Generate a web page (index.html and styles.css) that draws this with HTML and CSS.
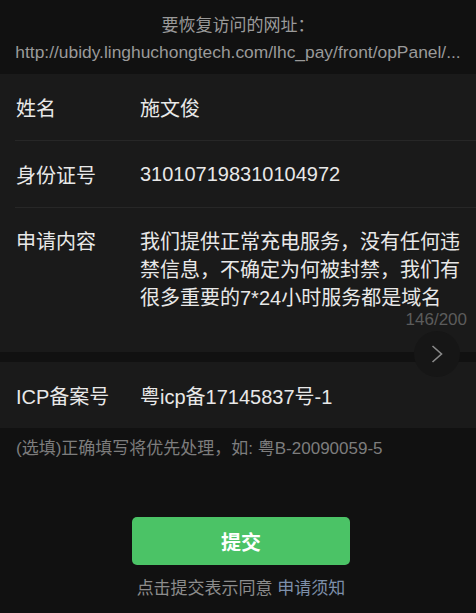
FILE: index.html
```html
<!DOCTYPE html>
<html lang="zh-CN">
<head>
  <meta charset="UTF-8">
  <meta name="viewport" content="width=device-width, initial-scale=1.0">
  <title>申请恢复访问</title>
  <link rel="stylesheet" href="styles.css">
</head>
<body>
  <div class="page">
    <!-- Target url -->
    <div class="target">
      <p class="target-title">要恢复访问的网址：</p>
      <p class="target-url">http://ubidy.linghuchongtech.com/lhc_pay/front/opPanel/...</p>
    </div>

    <!-- Applicant info -->
    <div class="group">
      <div class="row">
        <span class="label">姓名</span>
        <span class="value">施文俊</span>
      </div>
      <div class="row">
        <span class="label">身份证号</span>
        <span class="value">310107198310104972</span>
      </div>
      <div class="row row-text">
        <span class="label">申请内容</span>
        <div class="content">
          <p class="content-text">我们提供正常充电服务，没有任何违禁信息，不确定为何被封禁，我们有很多重要的7*24小时服务都是域名</p>
          <p class="counter">146/200</p>
        </div>
      </div>
    </div>

    <div class="group">
      <div class="row">
        <span class="label">ICP备案号</span>
        <span class="value">粤icp备17145837号-1</span>
      </div>
    </div>
    <p class="hint">(选填)正确填写将优先处理，如: 粤B-20090059-5</p>

    <div class="actions">
      <button type="button" class="submit-btn">提交</button>
      <p class="agree">点击提交表示同意 <a href="#" class="agree-link">申请须知</a></p>
    </div>

    <!-- floating next button -->
    <button type="button" class="float-next" aria-label="下一步">
      <svg width="12" height="18" viewBox="0 0 12 18"><path d="M1.5 1 L10.5 9 L1.5 17" fill="none" stroke="#8a8a8a" stroke-width="1.6"/></svg>
    </button>
  </div>
</body>
</html>
```

FILE: styles.css
```css
body {
  margin: 0;
  padding: 0;
  background-color: #111;
  font-family: "Liberation Sans", "Noto Sans CJK SC", sans-serif;
  color: #e8e8e8;
}
p {
  margin: 0;
}
.page {
  position: relative;
  min-height: 613px;
}
.target {
  padding: 12px 8px 8px;
  text-align: center;
  color: #9a9a9a;
  font-size: 17px;
  line-height: 27px;
}
.target-url {
  white-space: nowrap;
  overflow: hidden;
  font-size: 17.4px;
}
.group {
  background-color: #1a1a1a;
  margin-bottom: 10px;
}
.row {
  display: flex;
  align-items: center;
  min-height: 66px;
  margin-left: 15px;
  padding-left: 1px;
  padding-right: 16px;
  border-bottom: 1px solid #272727;
  font-size: 20px;
}
.row:last-child {
  border-bottom: none;
}
.label {
  width: 124px;
  flex-shrink: 0;
}
.row-text {
  align-items: flex-start;
  padding-top: 20px;
  padding-bottom: 24px;
}
.row-text .label {
  line-height: 28px;
}
.content {
  flex: 1;
}
.content-text {
  line-height: 28px;
}
.counter {
  text-align: right;
  margin-right: -7px;
  font-size: 17px;
  line-height: 16px;
  color: #5c5c5c;
}
.hint {
  margin-top: -10px;
  padding: 9px 16px 0;
  font-size: 17px;
  line-height: 24px;
  color: #7d7d7d;
}
.actions {
  display: flex;
  flex-direction: column;
  align-items: center;
  padding-top: 56px;
  padding-left: 6px;
}
.submit-btn {
  width: 218px;
  height: 48px;
  border: none;
  border-radius: 5px;
  background-color: #4bc366;
  color: #fff;
  font-family: inherit;
  font-size: 20px;
  font-weight: bold;
}
.agree {
  margin-top: 12px;
  font-size: 17px;
  line-height: 24px;
  color: #8c8c8c;
}
.agree-link {
  color: #7d8faa;
  text-decoration: none;
}
.float-next {
  position: absolute;
  left: 414px;
  top: 331px;
  width: 46px;
  height: 46px;
  border: none;
  border-radius: 50%;
  background-color: #161616;
  display: flex;
  align-items: center;
  justify-content: center;
  padding: 0;
}
```
